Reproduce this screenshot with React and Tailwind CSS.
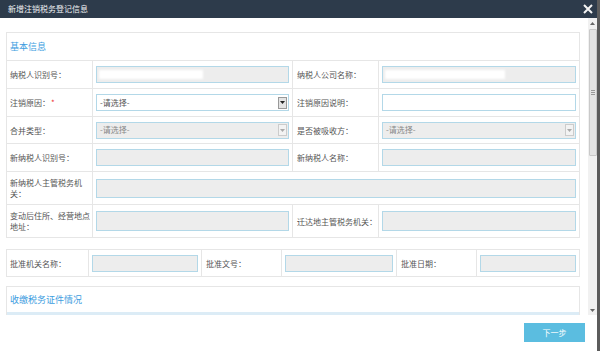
import React from "react";

const Box = ({ children, enabled, className = "" }) => (
  <div
    className={`relative w-full h-[17px] border border-[#b3d8e8] ${enabled ? "bg-white" : "bg-[#ededed]"} ${className}`}
  >
    {children}
  </div>
);

const Redact = ({ w }) => (
  <div className="absolute left-[2px] top-[3px] h-[9px] bg-white blur-[1px]" style={{ width: w }} />
);

const Select = ({ enabled }) => (
  <Box enabled={enabled} className="flex items-center">
    <span className={`pl-[3px] text-[8px] leading-none ${enabled ? "text-[#555]" : "text-[#888]"}`}>-请选择-</span>
    <div
      className={`ml-auto mr-[1px] w-[9px] h-[12px] flex items-center justify-center border ${enabled ? "border-[#999] bg-[#e4e4e4]" : "border-[#ccc] bg-[#f3f3f3]"}`}
    >
      <svg width="5" height="3" viewBox="0 0 5 3">
        <path d="M0 0 L5 0 L2.5 3 Z" fill={enabled ? "#222" : "#aaa"} />
      </svg>
    </div>
  </Box>
);

const Label = ({ children, className = "" }) => (
  <div className={`flex items-center pl-[3px] text-[8px] leading-[11px] text-[#555] ${className}`}>{children}</div>
);

const Cell = ({ children, className = "" }) => (
  <div className={`flex items-center px-[3px] ${className}`}>{children}</div>
);

export default function App() {
  const rowCls = "grid grid-cols-[85px_200px_86px_1fr] border-t border-[#e6e6e6]";
  const bl = "border-l border-[#e6e6e6]";
  return (
    <div className="w-[600px] h-[351px] flex flex-col bg-white border-r-[3px] border-[#5c5c5c] font-['Noto_Sans_CJK_SC',sans-serif] overflow-hidden">
      {/* header */}
      <div className="h-[18px] shrink-0 bg-[#2d3b4b] flex items-center justify-between pl-[8px] pr-[4px]">
        <span className="text-[8px] text-[#eef0f2] leading-none">新增注销税务登记信息</span>
        <svg width="10" height="10" viewBox="0 0 10 10">
          <path d="M1 1 L9 9 M9 1 L1 9" stroke="#f4f4f4" strokeWidth="2" />
        </svg>
      </div>

      {/* body */}
      <div className="h-[297px] shrink-0 flex">
        <div className="flex-1 overflow-hidden pl-[6px] pr-[8px] pt-[14px]">
          {/* panel 1 */}
          <div className="border border-[#e6e6e6]">
            <div className="h-[27px] flex items-center pl-[3px] text-[9px] text-[#3d9de0]">基本信息</div>
            <div className={`${rowCls} h-[28px]`}>
              <Label>纳税人识别号：</Label>
              <Cell className={bl}><Box><Redact w={104} /></Box></Cell>
              <Label className={`${bl} pl-[4px]`}>纳税人公司名称：</Label>
              <Cell className={bl}><Box><Redact w={120} /></Box></Cell>
            </div>
            <div className={`${rowCls} h-[28px]`}>
              <Label>注销原因：<span className="text-[#e33] ml-[1px]">*</span></Label>
              <Cell className={bl}><Select enabled /></Cell>
              <Label className={`${bl} pl-[4px]`}>注销原因说明：</Label>
              <Cell className={bl}><Box enabled /></Cell>
            </div>
            <div className={`${rowCls} h-[27px]`}>
              <Label>合并类型：</Label>
              <Cell className={bl}><Select /></Cell>
              <Label className={`${bl} pl-[4px]`}>是否被吸收方：</Label>
              <Cell className={bl}><Select /></Cell>
            </div>
            <div className={`${rowCls} h-[28px]`}>
              <Label>新纳税人识别号：</Label>
              <Cell className={bl}><Box /></Cell>
              <Label className={`${bl} pl-[4px]`}>新纳税人名称：</Label>
              <Cell className={bl}><Box /></Cell>
            </div>
            <div className={`${rowCls} h-[33px]`}>
              <Label>新纳税人主管税务机<br />关：</Label>
              <Cell className={`${bl} col-span-3`}><Box className="h-[19px]" /></Cell>
            </div>
            <div className={`${rowCls} h-[33px]`}>
              <Label>变动后住所、经营地点<br />地址：</Label>
              <Cell className={bl}><Box className="h-[20px]" /></Cell>
              <Label className={`${bl} pl-[4px]`}>迁达地主管税务机关：</Label>
              <Cell className={bl}><Box className="h-[20px]" /></Cell>
            </div>
          </div>

          {/* approval row */}
          <div className="mt-[11px] h-[28px] border border-[#e6e6e6] grid grid-cols-[81px_113px_80px_115px_80px_1fr]">
            <Label>批准机关名称：</Label>
            <Cell className={bl}><Box /></Cell>
            <Label className={`${bl} pl-[4px]`}>批准文号：</Label>
            <Cell className={bl}><Box /></Cell>
            <Label className={`${bl} pl-[4px]`}>批准日期：</Label>
            <Cell className={bl}><Box /></Cell>
          </div>

          {/* panel 3 */}
          <div className="mt-[9px] border border-[#e6e6e6]">
            <div className="h-[25px] flex items-center pl-[3px] text-[9px] text-[#3d9de0]">收缴税务证件情况</div>
            <div className="h-[20px] bg-[#dcecf6]" />
          </div>
        </div>

        {/* scrollbar */}
        <div className="w-[9px] shrink-0 bg-[#f1f1f1] flex flex-col items-center">
          <div className="h-[11px] flex items-center justify-center">
            <svg width="5" height="3" viewBox="0 0 5 3"><path d="M0 3 L5 3 L2.5 0 Z" fill="#666" /></svg>
          </div>
          <div className="w-[8px] h-[127px] bg-[#e4e4e4] border border-[#c9c9c9] rounded-[1px] flex flex-col items-center justify-center gap-[1px]">
            <div className="w-[4px] h-px bg-[#999]" />
            <div className="w-[4px] h-px bg-[#999]" />
            <div className="w-[4px] h-px bg-[#999]" />
          </div>
          <div className="flex-1" />
          <div className="h-[10px] flex items-center justify-center">
            <svg width="5" height="3" viewBox="0 0 5 3"><path d="M0 0 L5 0 L2.5 3 Z" fill="#666" /></svg>
          </div>
        </div>
      </div>

      {/* footer */}
      <div className="flex-1 flex justify-end items-start pt-[8px] pr-[12px]">
        <div className="w-[61px] h-[19px] bg-[#5bbde0] flex items-center justify-center text-[8px] text-white leading-none">
          下一步
        </div>
      </div>
    </div>
  );
}
